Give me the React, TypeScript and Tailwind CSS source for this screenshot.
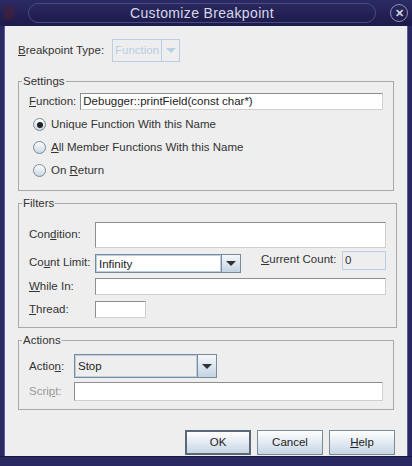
import React from "react";

const F = { fontFamily: '"Liberation Sans", Arial, sans-serif' };

function Field({ w, h = 17, value }: { w: string; h?: number; value?: string }) {
  return (
    <div
      className={`${w} border border-[#8e8e8e] border-r-[#cfcfcf] border-b-[#cfcfcf] bg-white px-[2px] text-[11.5px] leading-[15px] text-[#222]`}
      style={{ height: h }}
    >
      {value}
    </div>
  );
}

function Arrow({ light }: { light?: boolean }) {
  return (
    <div className={`w-[19px] flex items-center justify-center border-l ${light ? "border-[#b8cfe5] bg-[#eeeeee]" : "border-[#7a8a99] bg-gradient-to-b from-[#f4f8fc] to-[#c3d3e3]"}`}>
      <div className={`w-0 h-0 border-l-[5px] border-r-[5px] border-t-[5px] border-l-transparent border-r-transparent ${light ? "border-t-[#b8cfe5]" : "border-t-[#333]"}`} />
    </div>
  );
}

function Radio({ checked, children }: { checked?: boolean; children: React.ReactNode }) {
  return (
    <div className="flex items-center gap-[5px] h-[23px]">
      <div className="w-[13px] h-[13px] rounded-full border border-[#7a8a99] bg-gradient-to-b from-white to-[#c8d6e4] flex items-center justify-center">
        {checked && <div className="w-[6px] h-[6px] rounded-full bg-[#222]" />}
      </div>
      <span>{children}</span>
    </div>
  );
}

function Group({ title, className, children }: { title: string; className?: string; children: React.ReactNode }) {
  return (
    <fieldset className={`border border-[#a8a8a8] mx-[13px] px-[10px] ${className}`}>
      <legend className="px-[1px] -ml-[7px] text-[#333]">{title}</legend>
      {children}
    </fieldset>
  );
}

function Btn({ children, def }: { children: React.ReactNode; def?: boolean }) {
  return (
    <div className={`w-[66px] h-[25px] flex items-center justify-center ${def ? "border-2 border-[#5a6878]" : "border border-[#7a8a99]"} bg-gradient-to-b from-[#ffffff] to-[#c6d5e4] text-[#222]`}>
      {children}
    </div>
  );
}

export default function App() {
  return (
    <div style={F} className="w-[412px] h-[466px] bg-[#2a2860] flex flex-col text-[11.5px] text-[#333] overflow-hidden">
      <div className="h-[26px] flex items-center px-[4px] bg-gradient-to-b from-[#2c2a64] to-[#1c1a48]">
        <div className="w-[10px] h-[14px] rounded-sm bg-[#4a1f33] opacity-60" />
        <div className="flex-1 mx-[14px] h-[20px] rounded-full border border-[#4c4a86] flex items-center justify-center text-[#d8d8e8] text-[14px] tracking-wide">
          Customize Breakpoint
        </div>
        <div className="w-[18px] h-[18px] rounded-full border border-[#9090b0] flex items-center justify-center text-[#d0d0e0] text-[11px] font-bold">✕</div>
      </div>
      <div className="flex-1 mx-[4px] border-x border-[#5d5aa8] bg-[#eeeeee] flex flex-col">
        <div className="flex items-center h-[23px] mt-[13px] ml-[13px]">
          <span className="w-[94px]"><u>B</u>reakpoint Type:</span>
          <div className="w-[68px] flex h-[23px] border border-[#b8cfe5]">
            <div className="flex-1 px-[2px] leading-[21px] text-[#b8cfe5]">Function</div>
            <Arrow light />
          </div>
        </div>

        <Group title="Settings" className="mt-[11px] pb-[8px] pt-[2px]">
          <div className="flex items-center gap-[4px] h-[18px]">
            <span><u>F</u>unction:</span>
            <Field w="flex-1" value="Debugger::printField(const char*)" />
          </div>
          <div className="mt-[3px] ml-[4px]">
            <Radio checked>Unique Function With this Name</Radio>
            <Radio><u>A</u>ll Member Functions With this Name</Radio>
            <Radio>On <u>R</u>eturn</Radio>
          </div>
        </Group>

        <Group title="Filters" className="mt-[4px] pt-[9px] pb-[9px]">
          <div className="flex items-center">
            <span className="w-[66px]">Con<u>d</u>ition:</span>
            <Field w="flex-1" h={26} />
          </div>
          <div className="flex items-center mt-[6px]">
            <span className="w-[66px]">Co<u>u</u>nt Limit:</span>
            <div className="w-[146px] flex h-[19px] border border-[#7a8a99]">
              <div className="flex-1 px-[2px] bg-white border border-[#b8cfe5] leading-[17px] text-[#222]">Infinity</div>
              <Arrow />
            </div>
            <span className="ml-[20px] w-[81px] -mt-[6px]"><u>C</u>urrent Count:</span>
            <div className="w-[44px] h-[19px] -mt-[6px] border border-[#b8cfe5] px-[2px] leading-[17px]">0</div>
          </div>
          <div className="flex items-center mt-[5px]">
            <span className="w-[66px]"><u>W</u>hile In:</span>
            <Field w="flex-1" />
          </div>
          <div className="flex items-center mt-[6px]">
            <span className="w-[66px]"><u>T</u>hread:</span>
            <Field w="w-[51px]" />
          </div>
        </Group>

        <Group title="Actions" className="mt-[4px] pt-[5px] pb-[8px]">
          <div className="flex items-center">
            <span className="w-[45px]">Actio<u>n</u>:</span>
            <div className="w-[143px] flex h-[24px] border border-[#7a8a99]">
              <div className="flex-1 px-[2px] bg-[#eeeeee] border border-[#b8cfe5] leading-[21px] text-[#222]">Stop</div>
              <Arrow />
            </div>
          </div>
          <div className="flex items-center mt-[4px]">
            <span className="w-[45px] text-[#999]">Scri<u>p</u>t:</span>
            <Field w="flex-1" h={19} />
          </div>
        </Group>

        <div className="flex justify-end gap-[6px] mr-[12px] mt-[20px]">
          <Btn def>OK</Btn>
          <Btn>Cancel</Btn>
          <Btn><u>H</u>elp</Btn>
        </div>
      </div>
      <div className="h-[10px] bg-[#2a2860] border-t border-[#1a1840]" />
    </div>
  );
}
